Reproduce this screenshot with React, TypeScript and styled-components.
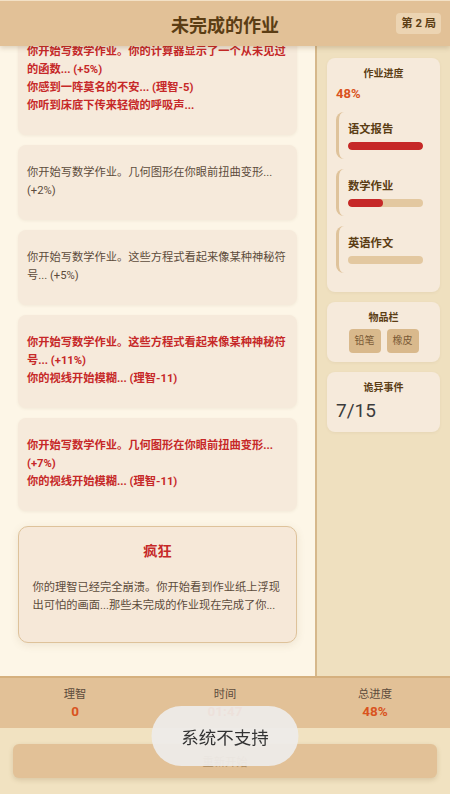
import React from 'react'
import styled, { createGlobalStyle } from 'styled-components'

type LogEntry = {
  lines: string[]
  alert?: boolean
}

type Task = {
  name: string
  progress: number
}

const logEntries: LogEntry[] = [
  {
    alert: true,
    lines: [
      '你开始写数学作业。你的计算器显示了一个从未见过的函数... (+5%)',
      '你感到一阵莫名的不安... (理智-5)',
      '你听到床底下传来轻微的呼吸声...',
    ],
  },
  { lines: ['你开始写数学作业。几何图形在你眼前扭曲变形... (+2%)'] },
  { lines: ['你开始写数学作业。这些方程式看起来像某种神秘符号... (+5%)'] },
  {
    alert: true,
    lines: ['你开始写数学作业。这些方程式看起来像某种神秘符号... (+11%)', '你的视线开始模糊... (理智-11)'],
  },
  {
    alert: true,
    lines: ['你开始写数学作业。几何图形在你眼前扭曲变形... (+7%)', '你的视线开始模糊... (理智-11)'],
  },
]

const tasks: Task[] = [
  { name: '语文报告', progress: 100 },
  { name: '数学作业', progress: 47 },
  { name: '英语作文', progress: 0 },
]

const GlobalStyle = createGlobalStyle`
  * {
    box-sizing: border-box;
  }
  html, body {
    margin: 0;
    padding: 0;
    height: 100%;
  }
  body {
    font-family: Roboto, "Noto Sans CJK SC", sans-serif;
    background: #fdf6e7;
  }
  #root {
    height: 100%;
  }
`

const Screen = styled.div`
  height: 100vh;
  display: flex;
  flex-direction: column;
  overflow: hidden;
`

const Header = styled.header`
  flex: none;
  height: 46px;
  display: grid;
  grid-template-columns: 1fr auto 1fr;
  align-items: center;
  padding: 0 9px;
  background: #e2c197;
  border-top: 1px solid #f3e1c6;
  box-shadow: 0 2px 5px rgba(90, 60, 20, 0.2);
  position: relative;
  z-index: 2;
`

const Title = styled.h1`
  grid-column: 2;
  margin: 0;
  font-size: 18px;
  font-weight: 700;
  color: #5b3d14;
`

const RoundBadge = styled.span`
  grid-column: 3;
  justify-self: end;
  padding: 3px 5px;
  border-radius: 4px;
  background: #ecd4b2;
  color: #5b3d14;
  font-size: 11.3px;
  font-weight: 700;
  line-height: 15px;
`

const Main = styled.main`
  flex: 1;
  min-height: 0;
  display: grid;
  grid-template-columns: 317px 1fr;
`

/* newest entries sit at the bottom, older ones run off the top */
const LogPanel = styled.section`
  display: flex;
  flex-direction: column;
  justify-content: flex-end;
  gap: 10px;
  padding: 0 18px 18px;
  overflow: hidden;
  background: #fdf6e7;
  border-right: 2px solid #d6b88b;
`

const LogCard = styled.div`
  flex: none;
  padding: 19.5px 9px;
  border-radius: 8px;
  background: #f6eadb;
  box-shadow: 0 1px 3px rgba(120, 90, 50, 0.08);
`

const LogLine = styled.p<{ $alert?: boolean }>`
  margin: 0;
  font-size: 11.25px;
  line-height: 18px;
  color: ${(p) => (p.$alert ? '#c62828' : '#5d4c3c')};
  font-weight: ${(p) => (p.$alert ? 700 : 400)};
`

const MadnessCard = styled.div`
  flex: none;
  margin: 5px 0 15px;
  padding: 14px 13.5px 27px;
  border: 1.5px solid #dec29a;
  border-radius: 10px;
  background: #f6e8d8;
  box-shadow: 0 2px 8px rgba(120, 90, 50, 0.12);
`

const MadnessTitle = styled.h2`
  margin: 0 0 18.5px;
  text-align: center;
  font-size: 14.2px;
  line-height: 20px;
  font-weight: 700;
  color: #c62828;
`

const MadnessText = styled.p`
  margin: 0;
  font-size: 11.25px;
  line-height: 18px;
  color: #5d4c3c;
`

const SidePanel = styled.aside`
  display: flex;
  flex-direction: column;
  gap: 10px;
  padding: 12px 10px;
  background: #efe0bf;
  overflow: hidden;
`

const PanelCard = styled.div`
  padding: 9px;
  border-radius: 8px;
  background: #f6eadb;
  box-shadow: 0 1px 3px rgba(120, 90, 50, 0.07);
`

const PanelTitle = styled.h3`
  margin: 0;
  text-align: center;
  font-size: 10px;
  line-height: 14px;
  font-weight: 700;
  color: #5b3d14;
`

const Percent = styled.div`
  margin: 4px 0 9.5px;
  font-size: 13px;
  line-height: 17px;
  font-weight: 700;
  color: #d9531e;
`

const TaskItem = styled.div`
  margin-bottom: 10px;
  padding: 10px 8px 9px 9px;
  border-left: 3px solid #dfc39b;
  border-radius: 8px;
`

const TaskName = styled.div`
  margin-bottom: 4px;
  font-size: 11.3px;
  line-height: 16px;
  font-weight: 600;
  color: #5b3d14;
`

const Track = styled.div`
  height: 8px;
  border-radius: 4px;
  background: #e3c8a0;
  overflow: hidden;
`

const Fill = styled.div`
  height: 100%;
  border-radius: 4px;
  background: #c62828;
`

const ChipRow = styled.div`
  display: flex;
  justify-content: center;
  gap: 6px;
  margin-top: 4px;
`

const Chip = styled.span`
  padding: 5px 6px;
  border-radius: 4px;
  background: #d9b98c;
  color: #7a5a35;
  font-size: 10px;
  line-height: 14px;
`

const EventCount = styled.div`
  margin-top: 4px;
  font-size: 19px;
  line-height: 24px;
  color: #3c3c3c;
`

const StatsBar = styled.div`
  flex: none;
  height: 52px;
  display: grid;
  grid-template-columns: repeat(3, 1fr);
  padding-top: 10px;
  background: #e2c197;
  border-top: 2px solid #d5b07e;
`

const Stat = styled.div`
  display: flex;
  flex-direction: column;
  align-items: center;
`

const StatLabel = styled.span`
  font-size: 11.3px;
  line-height: 14px;
  color: #5d4c3c;
`

const StatValue = styled.span`
  margin-top: 1px;
  font-size: 13.5px;
  line-height: 17px;
  font-weight: 700;
  color: #d9531e;
`

const Footer = styled.footer`
  flex: none;
  height: 66px;
  padding: 16px 13px;
  background: #f1e2c1;
`

const RestartButton = styled.button`
  width: 100%;
  height: 34px;
  border: none;
  border-radius: 6px;
  background: #e2c197;
  color: #b08c5c;
  font-family: inherit;
  font-size: 11.3px;
  box-shadow: 0 2px 5px rgba(120, 90, 50, 0.2);
`

const Toast = styled.div`
  position: fixed;
  left: 50%;
  bottom: 28px;
  transform: translateX(-50%);
  width: 147px;
  height: 60px;
  display: flex;
  align-items: center;
  justify-content: center;
  border-radius: 30px;
  background: rgba(238, 236, 233, 0.93);
  color: #333;
  font-size: 17.5px;
`

export default function App() {
  return (
    <Screen>
      <GlobalStyle />
      <Header>
        <Title>未完成的作业</Title>
        <RoundBadge>第 2 局</RoundBadge>
      </Header>

      <Main>
        <LogPanel>
          {logEntries.map((entry, i) => (
            <LogCard key={i}>
              {entry.lines.map((line, j) => (
                <LogLine key={j} $alert={entry.alert}>
                  {line}
                </LogLine>
              ))}
            </LogCard>
          ))}
          <MadnessCard>
            <MadnessTitle>疯狂</MadnessTitle>
            <MadnessText>
              你的理智已经完全崩溃。你开始看到作业纸上浮现出可怕的画面...那些未完成的作业现在完成了你...
            </MadnessText>
          </MadnessCard>
        </LogPanel>

        <SidePanel>
          <PanelCard>
            <PanelTitle>作业进度</PanelTitle>
            <Percent>48%</Percent>
            {tasks.map((task) => (
              <TaskItem key={task.name}>
                <TaskName>{task.name}</TaskName>
                <Track>
                  <Fill style={{ width: `${task.progress}%` }} />
                </Track>
              </TaskItem>
            ))}
          </PanelCard>

          <PanelCard>
            <PanelTitle>物品栏</PanelTitle>
            <ChipRow>
              <Chip>铅笔</Chip>
              <Chip>橡皮</Chip>
            </ChipRow>
          </PanelCard>

          <PanelCard>
            <PanelTitle>诡异事件</PanelTitle>
            <EventCount>7/15</EventCount>
          </PanelCard>
        </SidePanel>
      </Main>

      <StatsBar>
        <Stat>
          <StatLabel>理智</StatLabel>
          <StatValue>0</StatValue>
        </Stat>
        <Stat>
          <StatLabel>时间</StatLabel>
          <StatValue>01:47</StatValue>
        </Stat>
        <Stat>
          <StatLabel>总进度</StatLabel>
          <StatValue>48%</StatValue>
        </Stat>
      </StatsBar>

      <Footer>
        <RestartButton>重新开始</RestartButton>
      </Footer>

      <Toast>系统不支持</Toast>
    </Screen>
  )
}
